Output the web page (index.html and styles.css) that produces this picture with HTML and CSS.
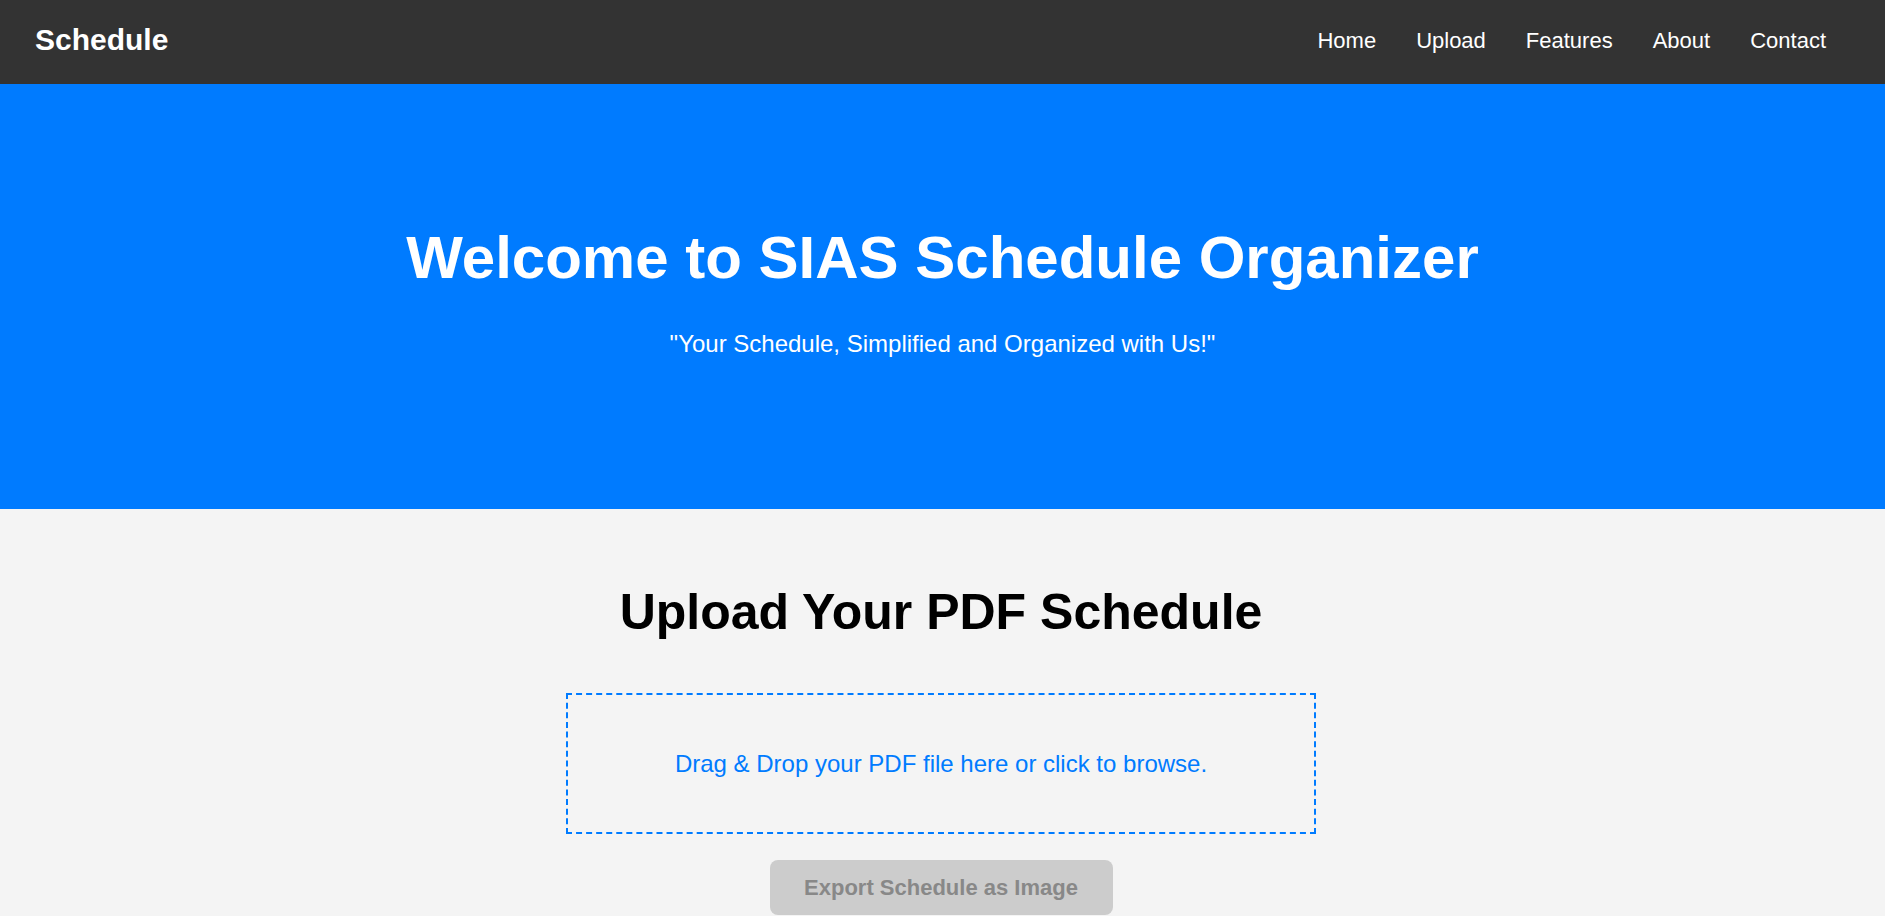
FILE: index.html
```html
<!DOCTYPE html>
<html lang="en">
<head>
<meta charset="utf-8">
<title>SIAS Schedule Organizer</title>
<link rel="stylesheet" href="styles.css">
</head>
<body>
<header class="navbar">
  <div class="logo">Schedule</div>
  <nav class="nav-links">
    <a href="#">Home</a>
    <a href="#">Upload</a>
    <a href="#">Features</a>
    <a href="#">About</a>
    <a href="#">Contact</a>
  </nav>
</header>
<section class="hero">
  <h1 class="hero-title">Welcome to SIAS Schedule Organizer</h1>
  <p class="hero-sub">"Your Schedule, Simplified and Organized with Us!"</p>
</section>
<section class="upload">
  <h2 class="upload-title">Upload Your PDF Schedule</h2>
  <div class="dropzone">
    <p class="dropzone-text">Drag &amp; Drop your PDF file here or click to browse.</p>
  </div>
  <button class="export-btn" disabled>Export Schedule as Image</button>
</section>
</body>
</html>
```

FILE: styles.css
```css
* {
  box-sizing: border-box;
}

html, body {
  margin: 0;
  padding: 0;
}

body {
  font-family: "Liberation Sans", Arial, sans-serif;
  background: #f4f4f4;
  color: #000;
}

.navbar {
  height: 84px;
  background: #333333;
  display: flex;
  align-items: center;
  justify-content: space-between;
  padding: 0 59px 3px 35px;
}

.logo {
  color: #ffffff;
  font-size: 30px;
  font-weight: bold;
  padding-bottom: 1px;
}

.nav-links {
  display: flex;
  gap: 40px;
}

.nav-links a {
  color: #ffffff;
  text-decoration: none;
  font-size: 22px;
}

.hero {
  background: #007bff;
  color: #ffffff;
  text-align: center;
  height: 425px;
  padding-top: 140px;
}

.hero-title {
  margin: 0 0 39px;
  font-size: 60px;
  line-height: 67px;
  font-weight: bold;
}

.hero-sub {
  margin: 0;
  font-size: 24px;
  line-height: 28px;
}

.upload {
  display: flex;
  flex-direction: column;
  align-items: center;
  padding-top: 76px;
  padding-right: 3px;
}

.upload-title {
  margin: 0 0 53px;
  font-size: 50px;
  line-height: 55px;
  font-weight: bold;
}

.dropzone {
  width: 750px;
  height: 141px;
  border: 2px dashed #007bff;
  display: flex;
  align-items: center;
  justify-content: center;
}

.dropzone-text {
  margin: 0;
  color: #007bff;
  font-size: 24px;
}

.export-btn {
  margin-top: 26px;
  width: 343px;
  height: 55px;
  border: none;
  border-radius: 8px;
  background: #cccccc;
  color: #888888;
  font-family: "Liberation Sans", Arial, sans-serif;
  font-size: 22px;
  font-weight: bold;
  cursor: not-allowed;
}
```
